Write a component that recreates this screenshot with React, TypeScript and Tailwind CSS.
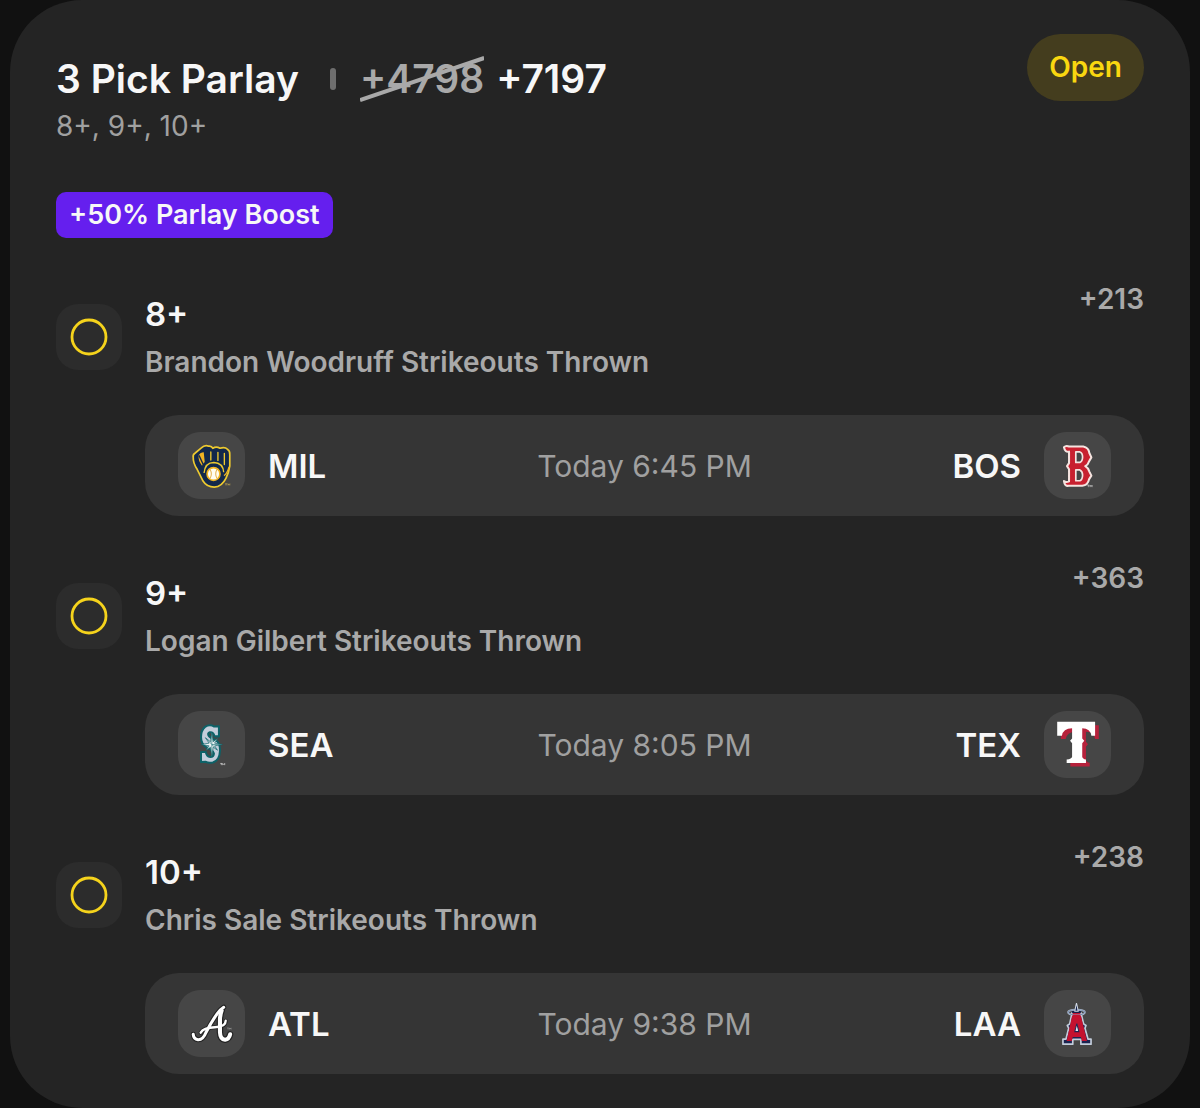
import type { ReactNode } from 'react';
import { clsx } from 'clsx';

type Team = 'MIL' | 'BOS' | 'SEA' | 'TEX' | 'ATL' | 'LAA';

type Leg = {
  line: string;
  market: string;
  odds: string;
  away: Team;
  home: Team;
  time: string;
};

const legs: Leg[] = [
  { line: '8+', market: 'Brandon Woodruff Strikeouts Thrown', odds: '+213', away: 'MIL', home: 'BOS', time: 'Today 6:45 PM' },
  { line: '9+', market: 'Logan Gilbert Strikeouts Thrown', odds: '+363', away: 'SEA', home: 'TEX', time: 'Today 8:05 PM' },
  { line: '10+', market: 'Chris Sale Strikeouts Thrown', odds: '+238', away: 'ATL', home: 'LAA', time: 'Today 9:38 PM' },
];

const texasT =
  'M60 53 H172 V94 H161 Q158 73 134 72 V102 L140 109 L134 116 V156 Q135 163 145 164 V175 H88 V164 Q103 163 104 156 V116 L98 109 L104 102 V72 Q77 73 74 94 H60Z';

const atlantaLeft = 'M156 72 Q146 78 136 92 Q118 118 104 146 Q95 169 80 168 Q67 166 66 152';
const atlantaRight = 'M150 82 Q145 95 145 110 V146 Q146 167 160 168 Q172 166 175 152';
const atlantaBar = 'M88 147 Q96 132 130 131 Q162 130 162 112';

// all logos share one 198 unit square, offset by 21
const logos: Record<Team, ReactNode> = {
  MIL: (
    <>
      <path
        d="M66 96 Q64 88 72 83 L90 68 Q100 58 112 63 Q120 62 124 69 Q134 62 145 69 Q160 64 167 72 Q175 77 174 88 V122 Q171 142 163 157 Q151 182 128 184 Q106 184 95 166 L78 132 Q65 112 66 96Z"
        fill="#12284b"
        stroke="#edc92f"
        strokeWidth="5"
        strokeLinejoin="round"
      />
      <path d="M82 90 Q88 80 97 81 L100 110 Q95 115 92 121 Q80 106 82 90Z" fill="#f0b323" />
      <path d="M83 90 L97 120" stroke="#12284b" strokeWidth="4" fill="none" />
      <path d="M118 104 V80 M139 105 V81 M158 117 V84" stroke="#edc92f" strokeWidth="4" strokeLinecap="round" fill="none" />
      <path d="M98 142 Q101 111 127 111 Q154 112 156 140" fill="none" stroke="#edc92f" strokeWidth="4" />
      <path d="M172 124 Q166 144 157 150" fill="none" stroke="#f0b323" strokeWidth="4" />
      <circle cx="126" cy="145" r="19" fill="#fffdf2" stroke="#f0b323" strokeWidth="5" />
      <path d="M116 132 Q123 145 116 158 M136 132 Q129 145 136 158" fill="none" stroke="#e5b352" strokeWidth="3" />
      <path d="M160 174 H167 M163 174 V179 M169 179 V174 L171 177 L174 174 V179" fill="none" stroke="#c0a650" strokeWidth="2" />
    </>
  ),
  BOS: (
    <>
      <path
        d="M80 66 Q86 60 95 64 H137 Q153 67 155 83 L161 96 L154 108 Q151 118 143 122 Q152 127 155 138 L161 150 L154 161 Q151 178 134 180 H94 Q82 182 80 166 Q86 171 95 167 V131 L89 122 L95 113 V79 Q83 82 80 66Z"
        fill="#c8202f"
        stroke="#f5e4e0"
        strokeWidth="6"
        strokeLinejoin="round"
      />
      <path
        d="M115 80 H127 Q135 83 135 95 Q135 108 127 111 H115Z M115 133 H127 Q135 137 135 148 Q135 162 127 165 H115Z"
        fill="#464646"
        stroke="#f5e4e0"
        strokeWidth="5"
        strokeLinejoin="round"
      />
      <path d="M149 178 H155 M152 178 V184 M157 184 V178 L160 182 L163 178 V184" fill="none" stroke="#cfcfcf" strokeWidth="2" />
    </>
  ),
  SEA: (
    <>
      <path
        d="M101 68 Q115 59 128 67 L142 66 V96 H129 Q126 83 115 84 Q108 86 111 93 Q116 101 133 108 Q146 116 145 139 Q144 167 124 173 Q112 176 102 171 L89 172 V142 H103 Q105 156 116 157 Q128 156 127 146 Q123 136 105 128 Q89 119 89 98 Q89 78 101 68Z"
        fill="#c4cedb"
        stroke="#0e6268"
        strokeWidth="6"
        strokeLinejoin="round"
      />
      <path
        d="M102 100 L117 112 L121 84 L125 112 L138 102 L129 116 L152 120 L129 124 L138 137 L125 128 L121 156 L117 128 L104 137 L113 124 L90 120 L113 116Z"
        fill="#f1f5f6"
        stroke="#0e6268"
        strokeWidth="2"
      />
      <path d="M121 86 V120 L104 102 M121 120 H150 M121 120 V154 M121 120 L136 135" fill="none" stroke="#2a7a80" strokeWidth="2" />
      <path d="M146 176 H151 M149 176 V181 M153 181 V176 L156 179 L159 176 V181" fill="none" stroke="#e2e2e2" strokeWidth="2" />
    </>
  ),
  TEX: (
    <>
      <path d={texasT} fill="#b6213b" transform="translate(11 10)" />
      <path d={texasT} fill="#fff" />
    </>
  ),
  ATL: (
    <>
      <g fill="none" stroke="#222" strokeLinecap="round" strokeLinejoin="round">
        <path d={atlantaLeft} strokeWidth="15" />
        <path d={atlantaRight} strokeWidth="19" />
        <path d={atlantaBar} strokeWidth="12" />
      </g>
      <g fill="none" stroke="#fff" strokeLinecap="round" strokeLinejoin="round">
        <path d={atlantaLeft} strokeWidth="9" />
        <path d={atlantaRight} strokeWidth="12" />
        <path d={atlantaBar} strokeWidth="7" />
      </g>
      <path d="M166 133 H171 M169 133 V138 M173 138 V133 L175 136 L178 133 V138" fill="none" stroke="#d2d2d2" strokeWidth="1" />
    </>
  ),
  LAA: (
    <>
      <path
        d="M104 88 H130 L138 121 L145 126 L142 134 L151 166 H160 V181 H130 V167 H106 V181 H77 V166 H86 L94 134 L90 126 L97 121Z"
        fill="#1b2451"
        stroke="#c3cddb"
        strokeWidth="5"
        strokeLinejoin="round"
      />
      <path d="M106 88 H128 L148 172 H133 L130 160 H106 L103 172 H88Z" fill="#c4122f" />
      <path d="M118 120 L124 144 H112Z" fill="#e5e9ee" stroke="#1b2451" strokeWidth="3" />
      <ellipse cx="117" cy="87" rx="25" ry="8" fill="none" stroke="#c3cddb" strokeWidth="5" />
      <ellipse cx="117" cy="87" rx="25" ry="8" fill="none" stroke="#4b6a99" strokeWidth="2" />
      <path d="M104 86 H130" stroke="#15204a" strokeWidth="6" />
      <path d="M106 96 H128" stroke="#c4122f" strokeWidth="5" />
      <path d="M112 84 L115 68 L117 60 L119 68 L122 84Z" fill="#17244e" stroke="#d1d9e4" strokeWidth="3" />
    </>
  ),
};

function TeamSide({ team, home }: { team: Team; home?: boolean }) {
  return (
    <div className={clsx('flex flex-1 items-center gap-[23px]', home && 'flex-row-reverse')}>
      <div className="size-[67px] shrink-0 rounded-[22px] bg-[#464646]">
        <svg viewBox="21 21 198 198" className="size-full" aria-hidden="true">
          {logos[team]}
        </svg>
      </div>
      <span className="text-[33px] leading-10 font-semibold text-[#f7f7f7]">{team}</span>
    </div>
  );
}

function LegRow({ leg }: { leg: Leg }) {
  return (
    <li className="flex gap-[23px]">
      <div className="mt-6 grid size-[66px] shrink-0 place-items-center rounded-[22px] bg-[#2c2c2c]">
        <svg viewBox="0 0 38 38" className="size-[38px]" role="img" aria-label="Pending">
          <circle cx="19" cy="19" r="17" fill="none" stroke="#f5d31c" strokeWidth="2.8" />
        </svg>
      </div>
      <div className="min-w-0 flex-1">
        <div className="flex items-start justify-between">
          <div className="pt-[14px]">
            <h2 className="text-[33px] leading-10 font-semibold text-[#f7f7f7]">{leg.line}</h2>
            <p className="mt-[10px] text-[28px] leading-9 font-semibold text-[#a9a9a9]">{leg.market}</p>
          </div>
          <span className="text-[28px] leading-[38px] font-semibold text-[#a9a9a9]">{leg.odds}</span>
        </div>
        <div className="mt-[35px] flex items-center rounded-[34px] bg-[#353535] px-[33px] py-[17px]">
          <TeamSide team={leg.away} />
          <time className="text-[30px] leading-10 text-[#a0a0a0]">{leg.time}</time>
          <TeamSide team={leg.home} home />
        </div>
      </div>
    </li>
  );
}

export default function App() {
  return (
    <div className="bg-[#111111] px-[10px] font-['Inter',sans-serif]">
      <main className="rounded-[72px] bg-[#242424] px-[46px] pt-[34px] pb-[34px]">
        <header className="flex items-start justify-between">
          <div className="pt-[21px]">
            <div className="flex items-center">
              <h1 className="text-[39px] leading-12 font-semibold text-[#f7f7f7]">3 Pick Parlay</h1>
              <span className="mr-6 ml-[31px] h-[22px] w-[6px] rounded-full bg-[#6e6e6e]" />
              <div className="flex gap-3 text-[39px] leading-12 font-semibold">
                <del className="relative text-[#a9a9a9] no-underline">
                  +4798
                  <svg viewBox="0 0 122 48" preserveAspectRatio="none" className="absolute inset-0 size-full" aria-hidden="true">
                    <path d="M0 45 L122 3" stroke="#a9a9a9" strokeWidth="4" />
                  </svg>
                </del>
                <span className="text-[#f7f7f7]">+7197</span>
              </div>
            </div>
            <p className="mt-[5px] text-[28px] leading-9 text-[#a0a0a0]">8+, 9+, 10+</p>
          </div>
          <span className="rounded-full bg-[#443d1e] px-[22px] py-[15px] text-[28px] leading-[37px] font-semibold text-[#f9d710]">Open</span>
        </header>
        <div className="mt-12 flex">
          <span className="rounded-[10px] bg-[#651fee] px-[13px] py-[5px] text-[27px] leading-9 font-semibold text-[#f7f7f7]">+50% Parlay Boost</span>
        </div>
        <ul className="mt-[42px] flex flex-col gap-[43px]">
          {legs.map((leg) => (
            <LegRow key={leg.line} leg={leg} />
          ))}
        </ul>
      </main>
    </div>
  );
}
